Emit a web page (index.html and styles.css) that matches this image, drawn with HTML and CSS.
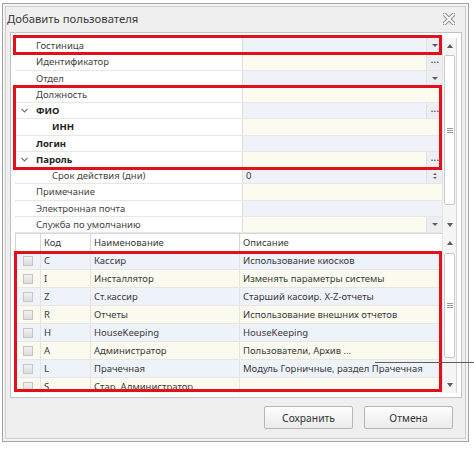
FILE: index.html
```html
<!DOCTYPE html>
<html lang="ru">
<head>
    <meta charset="UTF-8">
    <meta name="viewport" content="width=device-width, initial-scale=1.0">
    <title>Добавить пользователя</title>
    <link rel="stylesheet" href="styles.css">
</head>
<body>
    <div class="window">
        <div class="titlebar">
            <span class="title">Добавить пользователя</span>
            <svg class="close" width="12" height="12" viewBox="0 0 12 12">
                <path d="M1.5 1.5 L10.5 10.5 M10.5 1.5 L1.5 10.5" stroke="#8c8c8c" stroke-width="4" stroke-linecap="square"/>
                <path d="M1.5 1.5 L10.5 10.5 M10.5 1.5 L1.5 10.5" stroke="#fafafa" stroke-width="2" stroke-linecap="square"/>
            </svg>
        </div>

        <div class="panel">
            <!-- свойства пользователя -->
            <div class="props">
                <div class="prop-rows">
                    <div class="prop">
                        <div class="name"><span class="exp"></span>Гостиница</div>
                        <div class="val"><span class="btn"><i class="tri-down"></i></span></div>
                    </div>
                    <div class="prop">
                        <div class="name"><span class="exp"></span>Идентификатор</div>
                        <div class="val y"><span class="btn dots">···</span></div>
                    </div>
                    <div class="prop">
                        <div class="name"><span class="exp"></span>Отдел</div>
                        <div class="val"><span class="btn"><i class="tri-down"></i></span></div>
                    </div>
                    <div class="prop">
                        <div class="name"><span class="exp"></span>Должность</div>
                        <div class="val y"></div>
                    </div>
                    <div class="prop">
                        <div class="name bold"><span class="exp"><svg width="7" height="5" viewBox="0 0 7 5"><polyline points="0.5,0.8 3.5,3.8 6.5,0.8" fill="none" stroke="#6f6f6f" stroke-width="1.2"/></svg></span>ФИО</div>
                        <div class="val"><span class="btn dots">···</span></div>
                    </div>
                    <div class="prop">
                        <div class="name bold sub"><span class="exp"></span>ИНН</div>
                        <div class="val y"></div>
                    </div>
                    <div class="prop">
                        <div class="name bold"><span class="exp"></span>Логин</div>
                        <div class="val"></div>
                    </div>
                    <div class="prop">
                        <div class="name bold"><span class="exp"><svg width="7" height="5" viewBox="0 0 7 5"><polyline points="0.5,0.8 3.5,3.8 6.5,0.8" fill="none" stroke="#6f6f6f" stroke-width="1.2"/></svg></span>Пароль</div>
                        <div class="val y"><span class="btn dots">···</span></div>
                    </div>
                    <div class="prop">
                        <div class="name sub"><span class="exp"></span>Срок действия (дни)</div>
                        <div class="val">0<span class="btn spin"><i class="tri-up small"></i><i class="tri-down small"></i></span></div>
                    </div>
                    <div class="prop">
                        <div class="name"><span class="exp"></span>Примечание</div>
                        <div class="val y"></div>
                    </div>
                    <div class="prop">
                        <div class="name"><span class="exp"></span>Электронная почта</div>
                        <div class="val"></div>
                    </div>
                    <div class="prop">
                        <div class="name"><span class="exp"></span>Служба по умолчанию</div>
                        <div class="val y"><span class="btn"><i class="tri-down"></i></span></div>
                    </div>
                </div>
                <div class="vscroll">
                    <div class="arrow"><i class="tri-up"></i></div>
                    <div class="thumb props-thumb"><i class="grip"></i></div>
                    <div class="track"></div>
                    <div class="arrow"><i class="tri-down"></i></div>
                </div>
            </div>

            <!-- роли -->
            <div class="grid">
                <div class="grid-body">
                    <div class="grow head">
                        <div class="cell"></div>
                        <div class="cell">Код</div>
                        <div class="cell">Наименование</div>
                        <div class="cell">Описание</div>
                    </div>
                    <div class="grow">
                        <div class="cell"><span class="check"></span></div>
                        <div class="cell">C</div>
                        <div class="cell">Кассир</div>
                        <div class="cell">Использование киосков</div>
                    </div>
                    <div class="grow y">
                        <div class="cell"><span class="check"></span></div>
                        <div class="cell">I</div>
                        <div class="cell">Инсталлятор</div>
                        <div class="cell">Изменять параметры системы</div>
                    </div>
                    <div class="grow">
                        <div class="cell"><span class="check"></span></div>
                        <div class="cell">Z</div>
                        <div class="cell">Ст.кассир</div>
                        <div class="cell">Старший касоир. X-Z-отчеты</div>
                    </div>
                    <div class="grow y">
                        <div class="cell"><span class="check"></span></div>
                        <div class="cell">R</div>
                        <div class="cell">Отчеты</div>
                        <div class="cell">Использование внешних отчетов</div>
                    </div>
                    <div class="grow">
                        <div class="cell"><span class="check"></span></div>
                        <div class="cell">H</div>
                        <div class="cell">HouseKeeping</div>
                        <div class="cell">HouseKeeping</div>
                    </div>
                    <div class="grow y">
                        <div class="cell"><span class="check"></span></div>
                        <div class="cell">A</div>
                        <div class="cell">Администратор</div>
                        <div class="cell">Пользователи, Архив ...</div>
                    </div>
                    <div class="grow">
                        <div class="cell"><span class="check"></span></div>
                        <div class="cell">L</div>
                        <div class="cell">Прачечная</div>
                        <div class="cell">Модуль Горничные, раздел Прачечная</div>
                    </div>
                    <div class="grow y">
                        <div class="cell"><span class="check"></span></div>
                        <div class="cell">S</div>
                        <div class="cell">Стар. Администратор</div>
                        <div class="cell"></div>
                    </div>
                </div>
                <div class="vscroll">
                    <div class="arrow head-arrow"><i class="tri-up"></i></div>
                    <div class="thumb grid-thumb"><i class="grip"></i></div>
                    <div class="track"></div>
                    <div class="arrow"><i class="tri-down"></i></div>
                </div>
            </div>
        </div>

        <div class="footer">
            <button class="button">Сохранить</button>
            <button class="button">Отмена</button>
        </div>
    </div>

    <!-- пометки поверх скриншота -->
    <div class="mark mark-hotel"></div>
    <div class="mark mark-person"></div>
    <div class="mark mark-roles"></div>
    <div class="stray-line"></div>
</body>
</html>
```

FILE: styles.css
```css
* {
    box-sizing: border-box;
}
body {
    margin: 0;
    background: #fff;
    font-family: "Noto Sans", "Open Sans", sans-serif;
    font-size: 9.5px;
    color: #3a3a3a;
}
.window {
    margin: 3px 0 0 2px;
    width: 467px;
    height: 439px;
    border: 1px solid #a3a3a3;
    background: #efefef;
    box-shadow: inset 0 0 0 2px #f4f4f4, inset 0 0 0 3px #cdcdcd;
    display: flex;
    flex-direction: column;
}
.titlebar {
    height: 28px;
    flex: none;
    display: flex;
    align-items: center;
    justify-content: space-between;
    padding: 0 13px 0 4px;
}
.title {
    font-size: 11.3px;
    color: #3a3a3a;
}
.close {
    margin-top: 1px;
}
.panel {
    height: 366px;
    flex: none;
    margin: 0 6px 0 7px;
    border: 1px solid #c2c2c2;
    background: #fff;
    padding: 5px 4px 4px;
}

/* property grid */
.props {
    display: flex;
    height: 195px;
}
.prop-rows {
    flex: 1;
    display: grid;
    grid-auto-rows: 16.25px;
}
.prop {
    display: grid;
    grid-template-columns: 228px 1fr;
    border-bottom: 1px solid #e7e7e7;
}
.name {
    display: flex;
    align-items: center;
    white-space: nowrap;
    border-right: 1px solid #dedede;
    color: #444;
}
.name.bold {
    font-weight: bold;
    color: #222;
}
.name.sub .exp {
    width: 37px;
}
.exp {
    width: 21px;
    flex: none;
    padding-left: 6px;
    display: flex;
    align-items: center;
}
.val {
    display: flex;
    align-items: center;
    padding-left: 3px;
    background: #eff3f9;
    color: #333;
}
.val.y {
    background: #fcfbf0;
}
.btn {
    margin-left: auto;
    width: 16px;
    align-self: stretch;
    display: flex;
    align-items: center;
    justify-content: center;
    background: #eceef1;
    border-left: 1px solid #e0e2e6;
}
.btn .tri-down {
    border-width: 3px 3px 0;
}
.btn.dots {
    font-size: 9px;
    letter-spacing: 0.3px;
    color: #505050;
    font-weight: bold;
    padding-left: 1px;
}
.btn.spin {
    flex-direction: column;
    gap: 2px;
}
.tri-down,
.tri-up {
    display: block;
    width: 0;
    height: 0;
    border-left: 3.5px solid transparent;
    border-right: 3.5px solid transparent;
}
.tri-down {
    border-top: 4px solid #5c5c5c;
}
.tri-up {
    border-bottom: 4px solid #5c5c5c;
}
.btn .tri-down.small,
.tri-down.small {
    border-width: 2px 2px 0;
}
.tri-up.small {
    border-width: 0 2px 2px;
}

/* scrollbars */
.vscroll {
    width: 15px;
    flex: none;
    display: flex;
    flex-direction: column;
    background: #f5f5f5;
    border-left: 1px solid #e4e4e4;
    border-right: 1px solid #d8d8d8;
}
.arrow {
    height: 16px;
    flex: none;
    display: flex;
    align-items: center;
    justify-content: center;
}
.head-arrow {
    height: 19px;
}
.thumb {
    flex: none;
    margin: 1px 1px 0;
    border: 1px solid #c9c9c9;
    border-radius: 2px;
    background: #fff;
    display: flex;
    align-items: center;
    justify-content: center;
}
.props-thumb {
    height: 150px;
}
.grid-thumb {
    height: 105px;
}
.track {
    flex: 1;
}
.grip {
    display: block;
    width: 6px;
    height: 5px;
    background: linear-gradient(#9a9a9a 1px, transparent 1px) 0 0 / 6px 2px repeat-y;
}

/* roles grid */
.grid {
    display: flex;
    height: 160px;
}
.grid-body {
    flex: 1;
    overflow: hidden;
}
.grow {
    display: grid;
    grid-template-columns: 26px 50px 149px 1fr;
    height: 18px;
    background: #eef2f9;
    border-bottom: 1px solid #e6e6e6;
}
.grow.y {
    background: #fbfaef;
}
.grow.head {
    height: 19px;
    background: #fff;
    border-top: 1px solid #d6d6d6;
    border-bottom: 1px solid #d6d6d6;
}
.grow.head .cell {
    border-right-color: #d6d6d6;
}
.grow.head .cell:first-child {
    border-left: 1px solid #d6d6d6;
}
.cell {
    display: flex;
    align-items: center;
    padding-left: 3px;
    white-space: nowrap;
    overflow: hidden;
    border-right: 1px solid #e4e4e4;
}
.cell:last-child {
    border-right: none;
}
.cell:first-child {
    padding-left: 8px;
}
.check {
    width: 10px;
    height: 10px;
    border: 1px solid #c6c6c6;
    background: linear-gradient(#f3f3f3, #dcdcdc);
}

/* buttons */
.footer {
    flex: 1;
    display: flex;
    justify-content: flex-end;
    align-items: flex-start;
    gap: 11px;
    padding: 8px 15px 0 0;
}
.button {
    width: 89px;
    height: 23px;
    border: 1px solid #b6b6b6;
    border-radius: 2px;
    background: linear-gradient(#fdfdfd, #ebebeb);
    font-family: inherit;
    font-size: 10.3px;
    color: #333;
}

/* red annotation frames */
.mark {
    position: absolute;
    border: 3px solid #e3101c;
}
.mark-hotel {
    left: 13px;
    top: 35px;
    width: 429px;
    height: 20px;
}
.mark-person {
    left: 13px;
    top: 85px;
    width: 429px;
    height: 85px;
}
.mark-roles {
    left: 14px;
    top: 251px;
    width: 428px;
    height: 141px;
}
.stray-line {
    position: absolute;
    left: 375px;
    top: 362px;
    width: 99px;
    height: 1px;
    background: #5d5d5d;
}
```
